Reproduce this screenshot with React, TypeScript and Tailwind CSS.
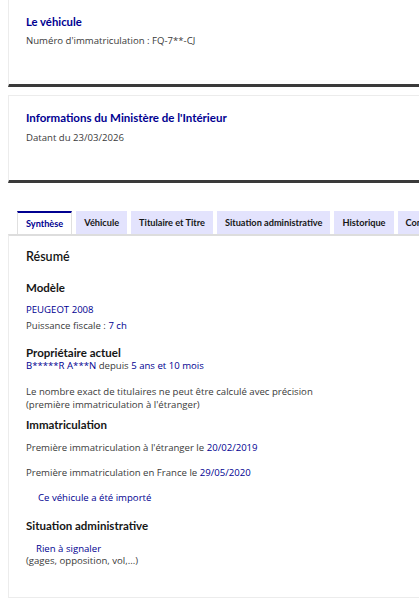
import React from "react";

const font = { fontFamily: '"Open Sans", "Noto Sans", Arial, sans-serif' };
const lato = { fontFamily: 'Lato, "Open Sans", Arial, sans-serif' };

const tabs = ["Synthèse", "Véhicule", "Titulaire et Titre", "Situation administrative", "Historique", "Contrôle technique"];

const H = "text-[11.5px] font-bold leading-[16px] text-[#161616]";

export default function App() {
  return (
    <div className="w-[419px] h-[600px] overflow-hidden bg-white" style={font}>
      <div className="ml-2 h-[87px] border-l border-[#ececec] border-b-[3px] border-b-[#3a3a3a] pl-[17px] pt-[14px]">
        <div className="text-[11.3px] font-bold leading-[16px] text-[#000091]" style={lato}>Le véhicule</div>
        <div className="mt-[4px] text-[9.6px] leading-[13px] text-[#3a3a3a]">Numéro d'immatriculation : FQ-7**-CJ</div>
      </div>
      <div className="ml-2 mt-[8px] h-[88px] border-l border-t border-[#ececec] border-b-[3px] border-b-[#3a3a3a] pl-[17px] pt-[14px]">
        <div className="text-[11.5px] font-bold leading-[16px] text-[#000091]" style={lato}>Informations du Ministère de l'Intérieur</div>
        <div className="mt-[5px] text-[9.6px] leading-[13px] text-[#3a3a3a]">Datant du 23/03/2026</div>
      </div>

      <div className="mt-[28px] ml-2">
        <div className="flex gap-[4px] pl-[9px] whitespace-nowrap overflow-hidden" style={lato}>
          {tabs.map((t, i) => (
            <div
              key={t}
              className={
                i === 0
                  ? "h-[23px] shrink-0 px-[8px] flex items-center text-[9.2px] font-bold text-[#000091] bg-white border-t-2 border-t-[#000091] border-x border-x-[#e0e0e0]"
                  : "h-[23px] shrink-0 px-[8px] flex items-center text-[9.2px] font-bold text-[#161616] bg-[#e3e3fd]"
              }
            >
              {t}
            </div>
          ))}
        </div>
        <div className="h-[364px] border-t-2 border-t-[#dddddd] border-l border-l-[#ececec] border-b border-b-[#ececec] pl-[17px] pt-[12px] text-[9.6px] leading-[13px] text-[#3a3a3a]">
          <div className="text-[12.5px] font-semibold leading-[18px] text-[#161616]" style={lato}>Résumé</div>
          <div className={"mt-[14px] " + H} style={lato}>Modèle</div>
          <div className="mt-[7px] text-[#000091]">PEUGEOT 2008</div>
          <div className="mt-[3px]">Puissance fiscale : <span className="text-[#000091]">7 ch</span></div>
          <div className={"mt-[13px] " + H} style={lato}>Propriétaire actuel</div>
          <div className="-mt-[2px] text-[#000091]">B*****R A***N <span className="text-[#3a3a3a]">depuis</span> 5 ans et 10 mois</div>
          <div className="mt-[13px]">Le nombre exact de titulaires ne peut être calculé avec précision</div>
          <div>(première immatriculation à l'étranger)</div>
          <div className={"mt-[6px] " + H} style={lato}>Immatriculation</div>
          <div className="mt-[8px]">Première immatriculation à l'étranger le <span className="text-[#000091]">20/02/2019</span></div>
          <div className="mt-[12px]">Première immatriculation en France le <span className="text-[#000091]">29/05/2020</span></div>
          <div className="mt-[12px] pl-[12px] text-[#000091]">Ce véhicule a été importé</div>
          <div className={"mt-[14px] " + H} style={lato}>Situation administrative</div>
          <div className="mt-[8px] pl-[10px] text-[#000091]">Rien à signaler</div>
          <div className="-mt-[1px]">(gages, opposition, vol,...)</div>
        </div>
      </div>
    </div>
  );
}
